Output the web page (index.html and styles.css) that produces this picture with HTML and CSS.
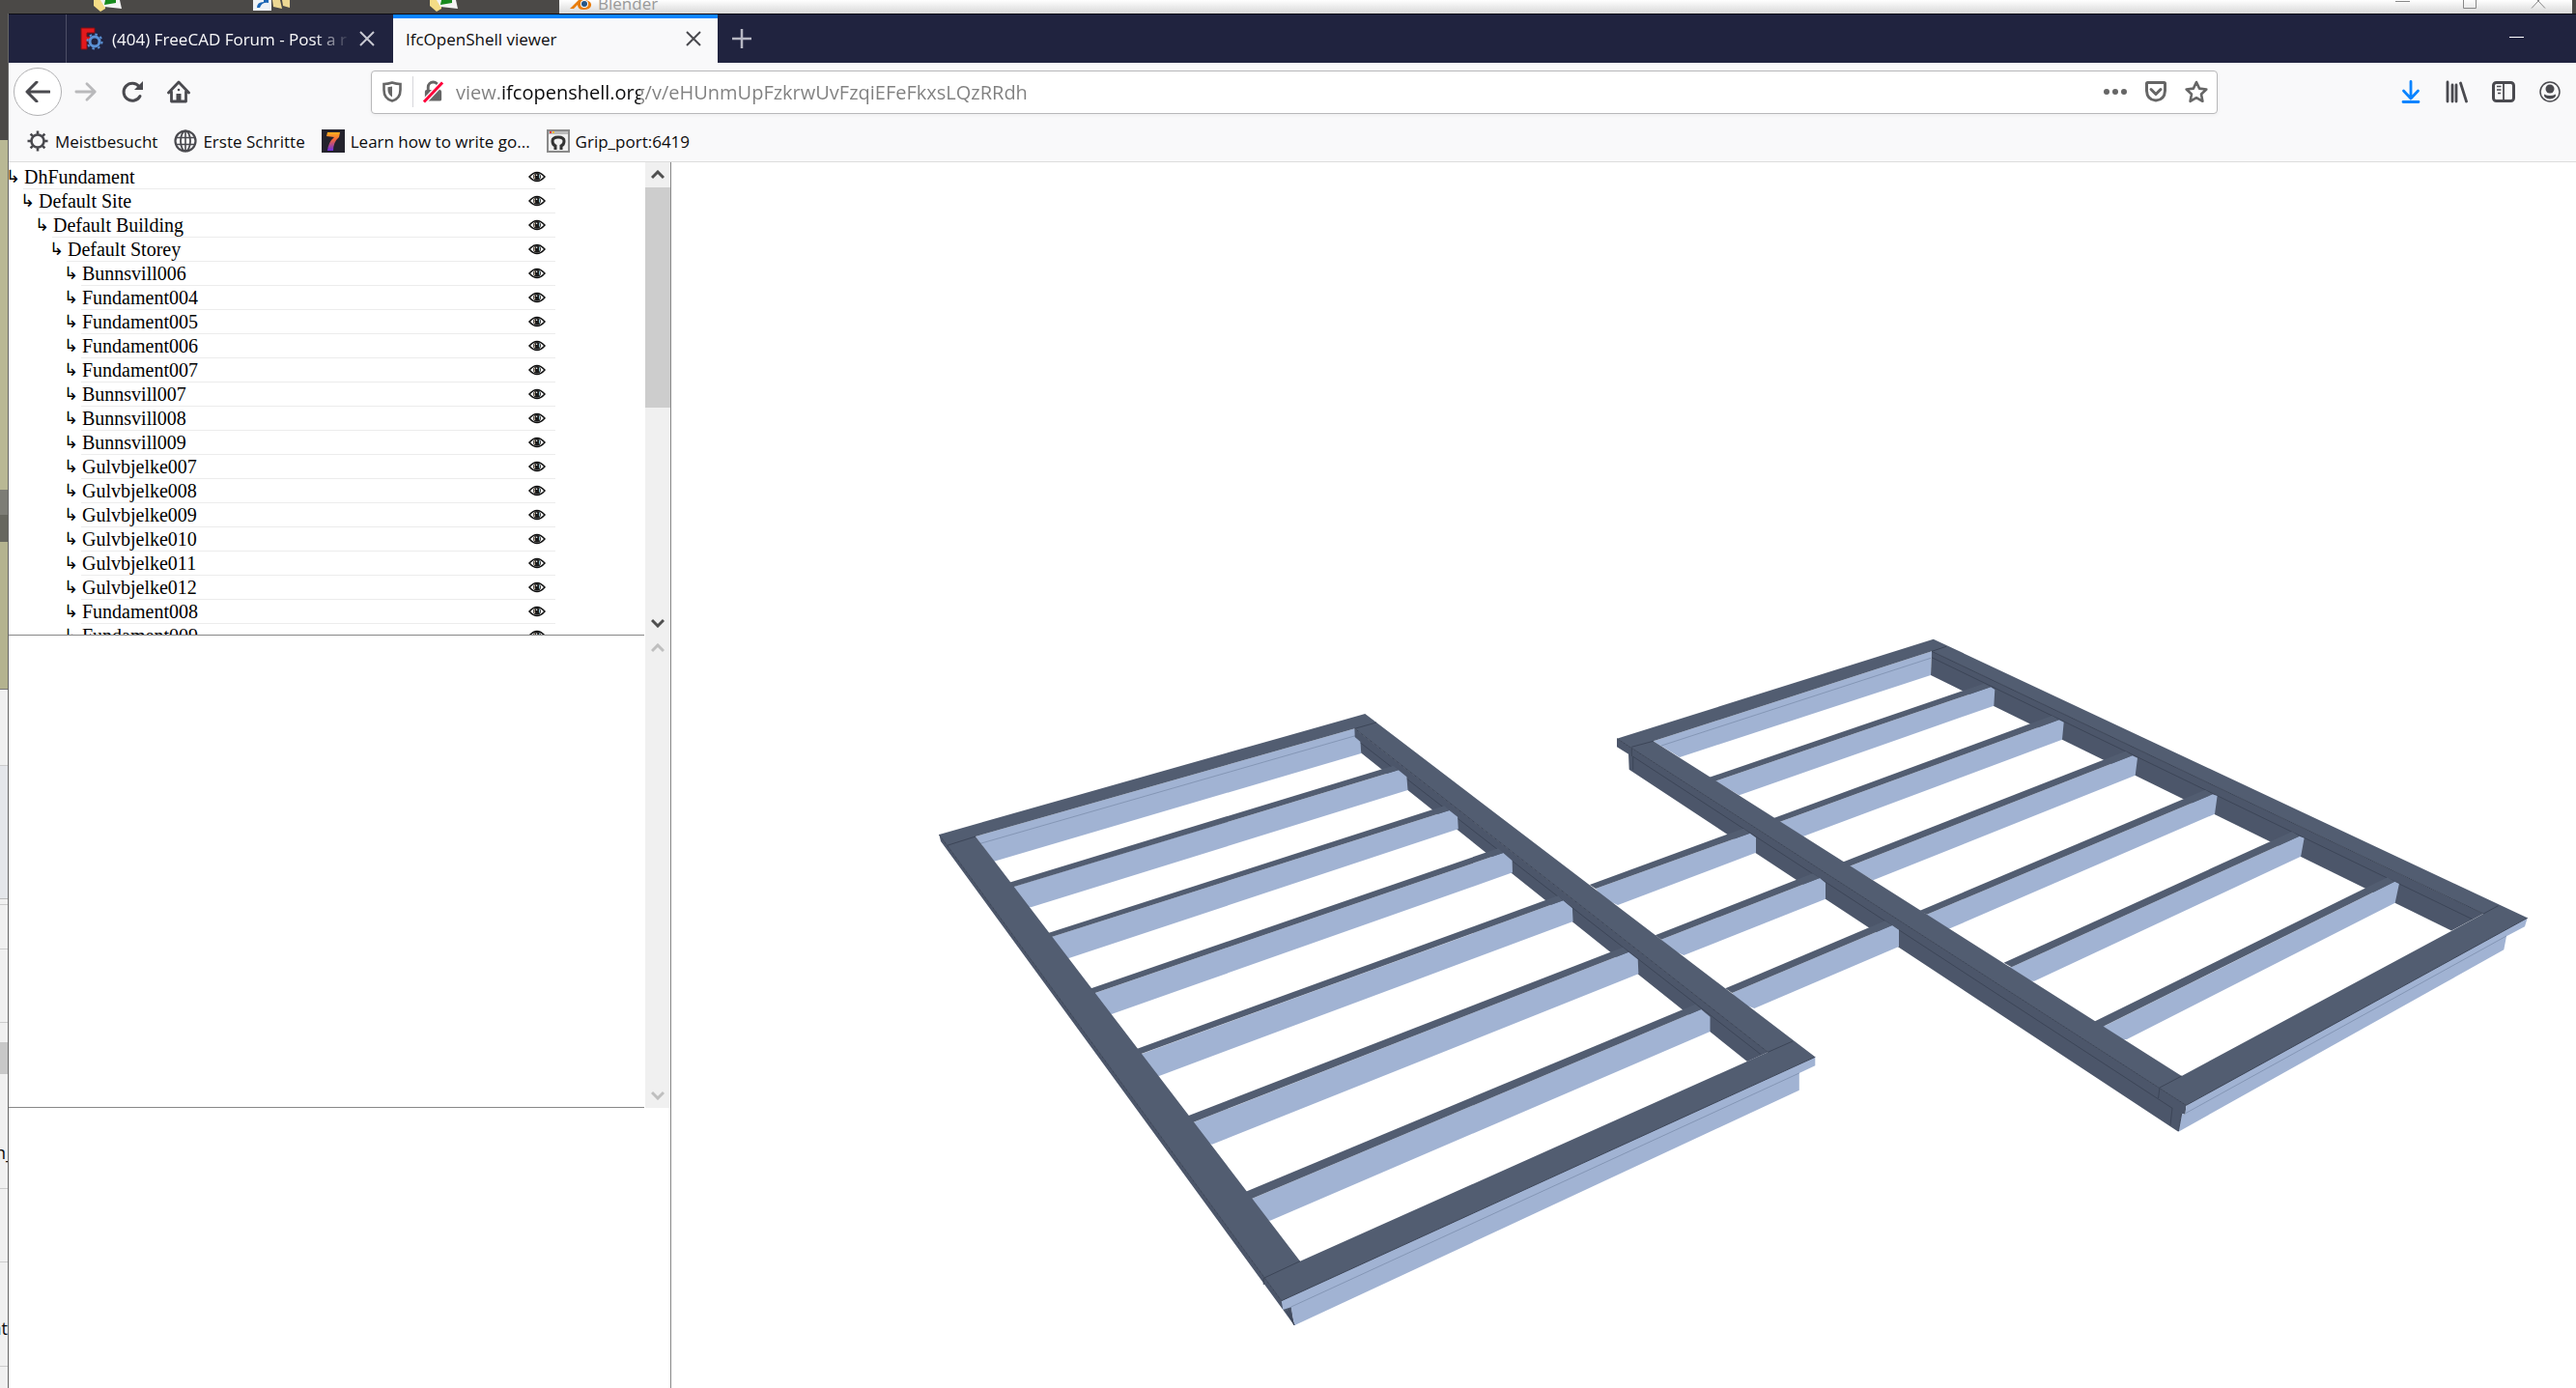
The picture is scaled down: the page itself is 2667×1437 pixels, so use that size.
FILE: index.html
```html
<!DOCTYPE html>
<html lang="de">
<head>
<meta charset="utf-8">
<title>IfcOpenShell viewer</title>
<link rel="stylesheet" href="styles.css">
</head>
<body>
<svg class="defs" aria-hidden="true">
  <symbol id="eye" viewBox="0 0 18 14"><path d="M1 7Q5 2.500 9 2.500T17 7Q13 11.500 9 11.500T1 7z" fill="#fff" stroke="#111" stroke-width="1.500"/><circle cx="9" cy="6.800" r="3.900" fill="#1a1a1a"/><path d="M6.800 4.500q-1.200 2.300 0 4.600" stroke="#cdb9a4" fill="none"/><path d="M11.500 4.500v4" stroke="#9bc3cc" fill="none"/><circle cx="8.600" cy="5.200" r=".8" fill="#fff"/></symbol>
  <symbol id="close" viewBox="0 0 16 16"><path d="M1 1l14 14M15 1L1 15" fill="none" stroke="currentColor" stroke-width="2"/></symbol>
  <symbol id="up" viewBox="0 0 14 10"><path d="M1 8l6-6 6 6" fill="none" stroke="currentColor" stroke-width="3"/></symbol>
  <symbol id="down" viewBox="0 0 14 10"><path d="M1 2l6 6 6-6" fill="none" stroke="currentColor" stroke-width="3"/></symbol>
  <symbol id="folder" viewBox="0 0 34 14"><path d="M1 0h12v9l-5 3-7-6z" fill="#f4dc86"/><path d="M8 0h20l2 9-18-2z" fill="#f3f3f3"/><path d="M13 0h11v3l-12 2z" fill="#178a1d"/></symbol>
</svg>

<header class="desktop-top">
  <svg class="shortcut first" viewBox="0 0 34 14"><use href="#folder"/></svg>
  <svg class="shortcut second" viewBox="0 0 40 14"><path d="M0 0h19v11H0z" fill="#eef2f6"/><path d="M4 8q0-6 7-6V0h5v3q-7-1-9 5z" fill="#1b66b5"/><path d="M20 0h8l2 9-9-2zM30 0h8v8l-7-2z" fill="#edd893"/></svg>
  <svg class="shortcut third" viewBox="0 0 34 14"><use href="#folder"/></svg>
  <div class="blender">
    <svg class="blender-logo" viewBox="0 0 24 12"><path d="M0 9L9 0h8q6 2 5 6t-8 4q-6 0-6-5L4 9z" fill="#e87d0d"/><circle cx="15" cy="4" r="4" fill="#fff"/><circle cx="15" cy="4" r="3" fill="#265787"/></svg>
    <span>Blender</span>
    <svg class="blender-controls" viewBox="0 0 156 10"><path d="M0 1.500h15M70.500 0v8.500h13V0M141 8.500L149 0M155 8.500L147 0" fill="none" stroke="#888"/></svg>
  </div>
</header>

<div class="desktop">
  <aside class="behind">
    <div class="b-dark"></div><div class="b-olive"></div><div class="b-roof"></div><div class="b-shade"></div><div class="b-olive2"></div>
    <div class="b-pale"></div><div class="b-band"></div><div class="b-gap"></div><div class="b-row46"></div><div class="b-row76"></div><div class="b-pale20"></div><div class="b-thumb"></div><div class="b-rest"></div>
    <div class="b-text under">n_</div><div class="b-row76"></div><div class="b-text tall">nt</div><div class="b-end"></div>
  </aside>

  <div class="window">
    <nav class="tabs" aria-label="Tabs">
      <div class="tab inactive">
        <svg class="favicon" viewBox="0 0 24 24"><path d="M1 1h14v5H7v4h6v4H7v9H1z" fill="#e4191c" stroke="#7e1015"/><circle cx="15" cy="15" r="5" fill="#20233f" stroke="#5b92d6" stroke-width="3"/><circle cx="15" cy="15" r="7.500" fill="none" stroke="#5b92d6" stroke-width="2" stroke-dasharray="2.500 3.400"/></svg>
        <span class="tab-title">(404) FreeCAD Forum - Post a r</span>
        <button class="tab-close" aria-label="Tab schließen"><svg viewBox="0 0 16 16"><use href="#close"/></svg></button>
      </div>
      <div class="tab active">
        <span class="tab-title">IfcOpenShell viewer</span>
        <button class="tab-close" aria-label="Tab schließen"><svg viewBox="0 0 16 16"><use href="#close"/></svg></button>
      </div>
      <button class="new-tab" aria-label="Neuer Tab"><svg viewBox="0 0 20 20"><path d="M10 0v20M0 10h20" stroke="currentColor" stroke-width="2.500"/></svg></button>
      <button class="minimize" aria-label="Minimieren"></button>
    </nav>

    <div class="toolbar">
      <button class="back" aria-label="Zurück"><svg viewBox="0 0 26 22"><path d="M25 11H3M12 1L2 11l10 10" fill="none" stroke="currentColor" stroke-width="3" stroke-linecap="round" stroke-linejoin="round"/></svg></button>
      <button class="nav-btn dim" aria-label="Vor"><svg viewBox="0 0 26 22"><path d="M2 11h21M14 2l9 9-9 9" fill="none" stroke="currentColor" stroke-width="3" stroke-linecap="round" stroke-linejoin="round"/></svg></button>
      <button class="nav-btn" aria-label="Neu laden"><svg viewBox="0 0 24 24"><path d="M20 16.500A9 9 0 1 1 19 6.500" fill="none" stroke="currentColor" stroke-width="3" stroke-linecap="round"/><path d="M14 10h9V1z" fill="currentColor"/></svg></button>
      <button class="nav-btn" aria-label="Startseite"><svg viewBox="0 0 24 24"><path d="M1.500 13L12 2l10.500 11M4.500 12v10h15V12" fill="none" stroke="currentColor" stroke-width="2.800" stroke-linejoin="round" stroke-linecap="round"/><path d="M9.500 14h5v8h-5z" fill="currentColor"/><circle cx="12" cy="10" r="1.300" fill="currentColor"/></svg></button>
      <div class="urlbar">
        <svg class="shield" viewBox="0 0 20 22"><path d="M10 1.500C7 2.500 4 3 1.500 3v6c0 6 3 10 8.500 11.500C15.500 19 18.500 15 18.500 9V3C16 3 13 2.500 10 1.500z" fill="none" stroke="#666" stroke-width="2.600"/><path d="M10 5.500v11C7 15 5.500 12 5.500 9V6.200z" fill="#666"/></svg>
        <svg class="lock" viewBox="0 0 24 24"><path d="M6.500 11V7a5.500 5.500 0 0 1 11 0v4" fill="none" stroke="#666" stroke-width="3"/><rect x="3" y="10" width="18" height="12" rx="2" fill="#666"/><path d="M2 23L22 2" stroke="#f9f9fa" stroke-width="6"/><path d="M2 23L22 2" stroke="#ff0039" stroke-width="3"/></svg>
        <input class="url" type="text" aria-label="Adresse" value="view.ifcopenshell.org/v/eHUnmUpFzkrwUvFzqiEFeFkxsLQzRRdh">
        <button class="nav-btn grey" aria-label="Seitenaktionen"><svg viewBox="0 0 24 24"><circle cx="3" cy="12" r="3" fill="currentColor"/><circle cx="12" cy="12" r="3" fill="currentColor"/><circle cx="21" cy="12" r="3" fill="currentColor"/></svg></button>
        <button class="nav-btn grey" aria-label="Pocket"><svg viewBox="0 0 24 24"><path d="M3.500 2.500h17q1 0 1 1V11q-.5 9.500-9.500 10Q3 20.500 2.500 11V3.500q0-1 1-1z" fill="none" stroke="currentColor" stroke-width="3"/><path d="M7 9.500l5 5 5-5" fill="none" stroke="currentColor" stroke-width="3" stroke-linecap="round" stroke-linejoin="round"/></svg></button>
        <button class="nav-btn grey" aria-label="Lesezeichen hinzufügen"><svg viewBox="0 0 24 24"><path d="M12 2l3.100 6.600 7.200.9-5.300 5 1.400 7.300L12 18.200l-6.400 3.600L7 14.500l-5.300-5 7.200-.9z" fill="none" stroke="currentColor" stroke-width="2.600" stroke-linejoin="round"/></svg></button>
      </div>
      <div class="tools">
        <button class="nav-btn blue" aria-label="Downloads"><svg viewBox="0 0 24 24"><path d="M12 1.500v17M4.500 11l7.500 8 7.500-8M4 22.500h16" fill="none" stroke="currentColor" stroke-width="2.800" stroke-linecap="round" stroke-linejoin="round"/></svg></button>
        <button class="nav-btn" aria-label="Bibliothek"><svg viewBox="0 0 24 24"><path d="M2 2v20M7 5v17M11 5v17M15.500 3l6 19" fill="none" stroke="currentColor" stroke-width="2.800" stroke-linecap="round"/></svg></button>
        <button class="nav-btn" aria-label="Seitenleiste"><svg viewBox="0 0 24 24"><rect x="1.500" y="2.500" width="21" height="19" rx="3" fill="none" stroke="currentColor" stroke-width="3"/><path d="M12 3v18" stroke="currentColor" stroke-width="1.800"/><path d="M5 6.500h4.500M5 10h4.500M6 13.500h3" stroke="currentColor" stroke-width="1.600"/></svg></button>
        <button class="nav-btn" aria-label="Konto"><svg viewBox="0 0 24 24"><circle cx="12" cy="12" r="10" fill="none" stroke="currentColor" stroke-width="1.500"/><circle cx="12" cy="9" r="4.500" fill="currentColor"/><path d="M6 14.500q6 3 12 0 .5 4.500-6 5-6.500-.5-6-5z" fill="currentColor"/></svg></button>
      </div>
    </div>

    <nav class="bookmarks" aria-label="Lesezeichen">
      <a href="#"><svg viewBox="0 0 24 24"><circle cx="12" cy="12" r="6.500" fill="none" stroke="#4a4a4f" stroke-width="2.600"/><path d="M12 1.500v4M12 18.500v4M1.500 12h4M18.500 12h4M4.600 4.600l2.800 2.800M16.600 16.600l2.800 2.800M19.400 4.600l-2.800 2.800M7.400 16.600l-2.800 2.800" stroke="#4a4a4f" stroke-width="2.600"/></svg>Meistbesucht</a>
      <a href="#"><svg viewBox="0 0 24 24"><circle cx="12" cy="12" r="10.500" fill="none" stroke="#4a4a4f" stroke-width="2.200"/><ellipse cx="12" cy="12" rx="5" ry="10.500" fill="none" stroke="#4a4a4f" stroke-width="1.800"/><path d="M12 2v20M2 8.500h20M2 15.500h20" stroke="#4a4a4f" stroke-width="1.600"/></svg>Erste Schritte</a>
      <a href="#"><svg viewBox="0 0 24 24"><defs><linearGradient id="seven" x2="0" y2="1"><stop stop-color="#ffb21c"/><stop offset=".4" stop-color="#f2643d"/><stop offset="1" stop-color="#6b2ee0"/></linearGradient></defs><path d="M0 0h24v24H0z" fill="#23222d"/><path d="M5 7l1-4h13l-1 5q-6 5-6 14H6q1-9 7-14z" fill="url(#seven)"/></svg>Learn how to write go...</a>
      <a href="#"><svg viewBox="0 0 24 24"><path d="M1 1h22v22H1z" fill="#f0f0f0" stroke="#8a8a8a" stroke-width="2"/><path d="M2 2h20v3H2z" fill="#bbb"/><path d="M3 2h2v2H3z" fill="#e33"/><path d="M6 2h2v2H6z" fill="#fb3"/><path d="M9 21v-4q-3-1-3-5 0-4 6-4t6 4q0 4-3 5v4" fill="none" stroke="#333" stroke-width="3"/></svg>Grip_port:6419</a>
    </nav>

    <main class="page">
      <section class="side">
        <div class="panel">
          <ul class="tree">
            <li class="l0"><span class="hook">↳</span><span class="name">DhFundament</span><button class="eye" aria-label="Sichtbarkeit"><svg viewBox="0 0 18 14"><use href="#eye"/></svg></button></li>
            <li class="l1"><span class="hook">↳</span><span class="name">Default Site</span><button class="eye" aria-label="Sichtbarkeit"><svg viewBox="0 0 18 14"><use href="#eye"/></svg></button></li>
            <li class="l2"><span class="hook">↳</span><span class="name">Default Building</span><button class="eye" aria-label="Sichtbarkeit"><svg viewBox="0 0 18 14"><use href="#eye"/></svg></button></li>
            <li class="l3"><span class="hook">↳</span><span class="name">Default Storey</span><button class="eye" aria-label="Sichtbarkeit"><svg viewBox="0 0 18 14"><use href="#eye"/></svg></button></li>
            <li class="l4"><span class="hook">↳</span><span class="name">Bunnsvill006</span><button class="eye" aria-label="Sichtbarkeit"><svg viewBox="0 0 18 14"><use href="#eye"/></svg></button></li>
            <li class="l4"><span class="hook">↳</span><span class="name">Fundament004</span><button class="eye" aria-label="Sichtbarkeit"><svg viewBox="0 0 18 14"><use href="#eye"/></svg></button></li>
            <li class="l4"><span class="hook">↳</span><span class="name">Fundament005</span><button class="eye" aria-label="Sichtbarkeit"><svg viewBox="0 0 18 14"><use href="#eye"/></svg></button></li>
            <li class="l4"><span class="hook">↳</span><span class="name">Fundament006</span><button class="eye" aria-label="Sichtbarkeit"><svg viewBox="0 0 18 14"><use href="#eye"/></svg></button></li>
            <li class="l4"><span class="hook">↳</span><span class="name">Fundament007</span><button class="eye" aria-label="Sichtbarkeit"><svg viewBox="0 0 18 14"><use href="#eye"/></svg></button></li>
            <li class="l4"><span class="hook">↳</span><span class="name">Bunnsvill007</span><button class="eye" aria-label="Sichtbarkeit"><svg viewBox="0 0 18 14"><use href="#eye"/></svg></button></li>
            <li class="l4"><span class="hook">↳</span><span class="name">Bunnsvill008</span><button class="eye" aria-label="Sichtbarkeit"><svg viewBox="0 0 18 14"><use href="#eye"/></svg></button></li>
            <li class="l4"><span class="hook">↳</span><span class="name">Bunnsvill009</span><button class="eye" aria-label="Sichtbarkeit"><svg viewBox="0 0 18 14"><use href="#eye"/></svg></button></li>
            <li class="l4"><span class="hook">↳</span><span class="name">Gulvbjelke007</span><button class="eye" aria-label="Sichtbarkeit"><svg viewBox="0 0 18 14"><use href="#eye"/></svg></button></li>
            <li class="l4"><span class="hook">↳</span><span class="name">Gulvbjelke008</span><button class="eye" aria-label="Sichtbarkeit"><svg viewBox="0 0 18 14"><use href="#eye"/></svg></button></li>
            <li class="l4"><span class="hook">↳</span><span class="name">Gulvbjelke009</span><button class="eye" aria-label="Sichtbarkeit"><svg viewBox="0 0 18 14"><use href="#eye"/></svg></button></li>
            <li class="l4"><span class="hook">↳</span><span class="name">Gulvbjelke010</span><button class="eye" aria-label="Sichtbarkeit"><svg viewBox="0 0 18 14"><use href="#eye"/></svg></button></li>
            <li class="l4"><span class="hook">↳</span><span class="name">Gulvbjelke011</span><button class="eye" aria-label="Sichtbarkeit"><svg viewBox="0 0 18 14"><use href="#eye"/></svg></button></li>
            <li class="l4"><span class="hook">↳</span><span class="name">Gulvbjelke012</span><button class="eye" aria-label="Sichtbarkeit"><svg viewBox="0 0 18 14"><use href="#eye"/></svg></button></li>
            <li class="l4"><span class="hook">↳</span><span class="name">Fundament008</span><button class="eye" aria-label="Sichtbarkeit"><svg viewBox="0 0 18 14"><use href="#eye"/></svg></button></li>
            <li class="l4"><span class="hook">↳</span><span class="name">Fundament009</span><button class="eye" aria-label="Sichtbarkeit"><svg viewBox="0 0 18 14"><use href="#eye"/></svg></button></li>
          </ul>
          <div class="scrollbar">
            <button aria-label="Nach oben"><svg viewBox="0 0 14 10"><use href="#up"/></svg></button>
            <div class="track"><div class="thumb"></div></div>
            <button aria-label="Nach unten"><svg viewBox="0 0 14 10"><use href="#down"/></svg></button>
          </div>
        </div>
        <div class="panel">
          <div class="props"></div>
          <div class="scrollbar disabled">
            <button disabled aria-label="Nach oben"><svg viewBox="0 0 14 10"><use href="#up"/></svg></button>
            <div class="track"></div>
            <button disabled aria-label="Nach unten"><svg viewBox="0 0 14 10"><use href="#down"/></svg></button>
          </div>
        </div>
        <div class="rest"></div>
      </section>
      <section class="viewer">
        <svg class="model" viewBox="695 168 1972 1269" preserveAspectRatio="xMidYMid meet" role="img" aria-label="3D-Modell">
          <!-- right frame: rim, inner wall and joists -->
          <path class="lit" d="M1711.700 767.300L2000 674.300 1999 699 1739 784z"/>
          <path class="wall" d="M2000 674L2571 946 2538 963.500 1999 699z"/>
          <path class="edge" d="M2000 680.700L2559.700 951.700"/>
          <path class="faint" d="M1720 772L1999 681.300"/>
          <path class="lit" d="M1775.700 808.700L2061 711.300 2065.300 714 2064.300 730.700 1800.700 823.300 1770 805z"/>
          <path class="top" d="M1769 805L2054 707.700 2061 711.300 1775.700 808.700z"/>
          <path class="lit" d="M1842.300 851L2131.700 745.300 2136.700 747.700 2135 765.700 1866.700 866 1836 847z"/>
          <path class="top" d="M1835.700 847.300L2124.300 741 2131.700 745.300 1842.300 851z"/>
          <path class="lit" d="M1915 896.700L2207.600 782.300 2213 784.700 2210.700 802.700 1939.300 911.300 1908 893z"/>
          <path class="top" d="M1907.300 892.700L2200.700 777.700 2207.600 782.300 1915 896.700z"/>
          <path class="lit" d="M1995 946.700L2290.700 822.300 2295.600 824 2293 842.700 2018.700 961.300 2010 961 1988 945z"/>
          <path class="top" d="M1987.300 943L2283 817.700 2290.700 822.300 1995 946.700z"/>
          <path class="lit" d="M2082.600 1001.300L2380.600 865.700 2385.600 867.700 2382.100 886.700 2106.200 1015.700 2096 1016 2076 1000z"/>
          <path class="top" d="M2074.600 996.700L2373 861 2380.600 865.700 2082.600 1001.300z"/>
          <path class="lit" d="M2179.400 1062L2479.300 912.700 2483.900 915 2479.700 934.700 2202 1076 2192 1077 2170 1060z"/>
          <path class="top" d="M2167 1058.300L2471.700 908.300 2479.300 912.700 2175 1064z"/>
          <path class="wall" d="M1674 764.700L2263.400 1144.300 2262.500 1154 2258.700 1152.700 2255.400 1171.700 1686.700 796.700 1686 780.700 1674 773.300z"/>
          <path class="lit" d="M2263.400 1144.300L2616.700 950.300 2614 959.300 2595 969.300 2592.300 983.300 2255.400 1171.700 2258.700 1152.700 2262.500 1154z"/>
          <path class="faint" d="M2262 1153L2595 969"/>
          <path class="edge" d="M1690.700 783.300L2249 1147.300M1689.300 773v10M1690.700 783v14M2236 1126L2234.500 1137M2249 1147L2247 1165M2258.700 1152.700L2255.400 1171"/>
          <path class="top" fill-rule="evenodd" d="M1674 764.700L2001.700 661.700 2616.700 950.300 2263.400 1144.300zM1711.700 767.300L2258.700 1114 2571.200 946 2000 674.300z"/>
          <path class="seam" d="M1689.300 773.300L1711.700 767.300M2000 674.300L2015 669.300M2571.200 946L2586.500 937.700M2236 1126L2258.700 1114M1674 764.700L2263.400 1144.300 2616.700 950.300M2000 674.300L2571.200 946"/>

          <!-- joists that bridge the two frames -->
          <path class="lit" d="M1652 920L1811.700 862.700 1818 867.300 1818 882.700 1675 937 1660 930z"/>
          <path class="top" d="M1645.800 916L1805 857.700 1811.700 862.700 1652 920z"/>
          <path class="lit" d="M1719.900 972.700L1884 909 1890 914 1890 930.700 1743.300 989 1728 982z"/>
          <path class="top" d="M1713.700 968.300L1876.700 904.300 1884 909 1719.900 972.700z"/>
          <path class="lit" d="M1793.200 1028L1959 958 1966 962.700 1966 980 1816.300 1044 1800 1038z"/>
          <path class="top" d="M1786.300 1023.300L1951.700 953.300 1959 958 1793.200 1028z"/>

          <!-- left frame -->
          <path class="lit" d="M1010 866L1402.700 754.300 1409.300 768 1409.300 780 1029.300 891.700z"/>
          <path class="faint" d="M1015 873.300L1403.300 761.700"/>
          <path class="wall" d="M1402.400 754.300L1830.400 1089.300 1809 1099 1409.200 779.500 1408.500 768 1402.700 763z"/>
          <path class="edge" d="M1408.500 769L1823 1091.700"/>
          <path class="lit" d="M1049.300 918L1447.800 797.300 1456.400 804.300 1457.500 818 1067.300 939.300 1058 938 1044 918z"/>
          <path class="top" d="M1044 914L1442.600 792.700 1447.800 797.300 1045 919.500z"/>
          <path class="lit" d="M1089.300 969.700L1500.500 839 1509.100 845.700 1509.800 858.300 1106.700 992 1097 990 1082 970z"/>
          <path class="top" d="M1082 967L1495.300 834.300 1500.500 839 1084 971.500z"/>
          <path class="lit" d="M1134 1028L1556.300 883 1565.600 891 1566 903.300 1150.700 1050 1140 1048 1126 1028z"/>
          <path class="top" d="M1126 1024.500L1551.100 878.300 1556.300 883 1128 1030z"/>
          <path class="lit" d="M1182.300 1091L1618.300 932.300 1627.900 940.300 1628.600 954 1200 1114 1190 1112 1174 1090z"/>
          <path class="top" d="M1174 1087L1613.100 927.300 1618.300 932.300 1176 1093z"/>
          <path class="lit" d="M1236 1161.700L1686.100 985.700 1695.700 993.300 1696.400 1008.300 1255 1184.700 1244 1182 1228 1160z"/>
          <path class="top" d="M1228 1156L1680.200 980.700 1686.100 985.700 1230 1164z"/>
          <path class="lit" d="M1296.700 1240.700L1761.200 1045 1770.500 1052.700 1770.500 1068 1315 1263.700 1304 1262 1288 1240z"/>
          <path class="top" d="M1288 1234.500L1755.300 1039.700 1761.200 1045 1290 1243.500z"/>
          <path class="wall" d="M972.300 864L1326.700 1346.700 1337 1353 1340 1372.300 1328.300 1356 974 871z"/>
          <path class="lit" d="M1326.700 1346.700L1879.300 1094.300V1103.300L1862.800 1111V1128.700L1340 1372.300 1336.700 1353.300 1328.300 1356z"/>
          <path class="faint" d="M1336.700 1353L1862.800 1111"/>
          <path class="edge" d="M1332 1357l8 15M1334 1355l6 17"/>
          <path class="top" fill-rule="evenodd" d="M972.300 864L1413.300 739 1879.300 1094.300 1326.700 1346.700zM1010 866L1346 1305.700 1830.400 1089.300 1402.700 754.300z"/>
          <path class="seam" d="M980.700 875.300L1010 866M1402.700 754.300L1425 748M1830.400 1089.300L1855.900 1078M1308.300 1323.300L1346 1305.700M972.300 864L1326.700 1346.700 1879.300 1094.300M1402.700 754.300L1830.400 1089.300M1308.300 1323.300V1330"/>
        </svg>
      </section>
    </main>
  </div>
</div>
</body>
</html>
```

FILE: styles.css
```css
* { box-sizing: border-box; }

body {
  margin: 0;
  height: 100vh;
  display: flex;
  flex-direction: column;
  overflow: hidden;
  background: #4b4947;
  font-family: "Open Sans", "Noto Sans", sans-serif;
  font-size: 17px;
  color: #0c0c0d;
}

button {
  border: 0;
  padding: 0;
  background: none;
  color: inherit;
  display: flex;
  align-items: center;
  justify-content: center;
}

svg { display: block; }
.defs { display: none; }

/* Desktop strip above the browser */
.desktop-top {
  flex: 0 0 14px;
  display: flex;
  overflow: hidden;
  padding-right: 4px;
}
.shortcut { flex: none; width: 34px; height: 14px; }
.first { margin-left: 96px; }
.second { margin-left: 132px; width: 40px; }
.third { margin-left: 142px; }
.blender {
  flex: 1;
  margin-left: 101px;
  padding: 0 27px 0 11px;
  display: flex;
  align-items: flex-end;
  gap: 5px;
  line-height: 20px;
  color: #999;
  background: linear-gradient(#fff, #d8d8d8);
}
.blender-logo { width: 24px; height: 12px; align-self: flex-start; }
.blender-controls { width: 156px; height: 10px; margin-left: auto; align-self: flex-start; }

.desktop { flex: 1; min-height: 0; display: flex; }

/* Windows showing behind the left edge */
.behind {
  flex: 0 0 9px;
  display: flex;
  flex-direction: column;
  overflow: hidden;
  background: #f0f0f0;
  border-right: 1px solid #666;
  font-size: 18px;
  line-height: 24px;
}
.behind > div { flex: none; }
.b-dark { height: 131px; background: #4b4947; }
.b-olive { height: 362px; background: #b9b894; }
.b-roof { height: 26px; background: #7d7d76; }
.b-shade { height: 28px; background: #67675f; }
.b-olive2 { height: 153px; background: #b4b38f; border-bottom: 1px solid #777; }
.b-pale { height: 79px; border-bottom: 1px solid #ccc; }
.b-band { height: 138px; background: #e4e6ea; border-bottom: 1px solid #bbb; }
.b-gap { height: 6px; border-bottom: 1px solid #ccc; }
.b-row46 { height: 46px; border-bottom: 1px solid #ccc; }
.b-row76 { height: 76px; border-bottom: 1px solid #ccc; }
.b-pale20 { height: 20px; }
.b-thumb { height: 33px; background: #c8c8c8; }
.b-rest { height: 69px; }
.b-text { height: 50px; border-bottom: 1px solid #ccc; display: flex; justify-content: flex-end; }
.b-text.under { justify-content: flex-start; text-indent: -5px; }
.b-text.tall { height: 108px; padding-top: 56px; }

.window {
  flex: 1;
  min-width: 0;
  display: flex;
  flex-direction: column;
  background: #fff;
}

/* Tab strip */
.tabs {
  flex: 0 0 51px;
  display: flex;
  border-top: 1px solid #0c0c14;
  padding-left: 59px;
  background: #20233f;
  color: #f9f9fa;
}
.tab { display: flex; align-items: center; }
.inactive { width: 339px; padding: 0 19px 0 14px; gap: 9px; border-left: 1px solid #4d4f66; }
.active { width: 336px; padding: 0 17px 4px 13px; background: #f9f9fa; color: #0c0c0d; border-top: 4px solid #0a84ff; }
.favicon { flex: none; width: 24px; height: 24px; }
.tab-title { flex: 1; min-width: 0; overflow: hidden; white-space: nowrap; }
.inactive .tab-title {
  -webkit-mask-image: linear-gradient(90deg, #000 85%, transparent);
  mask-image: linear-gradient(90deg, #000 85%, transparent);
}
.tab-close svg { width: 16px; height: 16px; }
.tab-close { flex: none; }
.inactive .tab-close { color: #c7c8d1; }
.active .tab-close { color: #4a4a4f; }
.new-tab { width: 50px; color: #b6b7c3; }
.new-tab svg { width: 20px; height: 20px; }
.minimize { margin: 23px 54px 0 auto; width: 15px; height: 1px; background: #fff; }

/* Navigation toolbar */
.toolbar {
  flex: 0 0 60px;
  display: flex;
  align-items: center;
  gap: 24px;
  padding: 0 15px 0 5px;
  background: #f9f9fa;
  color: #4a4a4f;
}
.back { width: 50px; height: 50px; margin-right: -11px; border: 1px solid #b1b1b3; border-radius: 50%; background: #fff; }
.back svg, .dim svg { width: 26px; height: 22px; }
.nav-btn { flex: none; width: 24px; height: 24px; }
.nav-btn svg { width: 24px; height: 24px; }
.toolbar .dim { color: #b9b9bb; }
.toolbar .dim svg { height: 22px; }
.blue { color: #0a84ff; }
.grey { color: #666; }
.urlbar {
  flex: 1;
  min-width: 0;
  height: 45px;
  margin: 0 164px 0 163px;
  display: flex;
  align-items: center;
  gap: 18px;
  padding: 0 9px 0 11px;
  background: #fff;
  border: 1px solid #b8b8ba;
  border-radius: 4px;
  box-shadow: 0 1px 4px #0000000d;
}
.shield { flex: none; width: 20px; height: 22px; }
.lock { flex: none; width: 33px; height: 32px; padding: 4px 0 4px 9px; border-left: 1px solid #d7d7db; margin: 0 -6px 0 -7px; }
.url {
  flex: 1;
  min-width: 0;
  border: 0;
  padding: 0;
  outline: 0;
  font: inherit;
  font-size: 20px;
  color: transparent;
  background: linear-gradient(90deg, #808080 47px, #0c0c0d 47px, #0c0c0d 191px, #808080 191px);
  -webkit-background-clip: text;
  background-clip: text;
}
.tools { display: flex; gap: 24px; }

/* Bookmarks toolbar */
.bookmarks {
  flex: 0 0 43px;
  display: flex;
  align-items: center;
  gap: 17px;
  padding: 0 18px;
  background: #f9f9fa;
  border-bottom: 1px solid #ddd;
}
.bookmarks a { display: flex; align-items: center; gap: 6px; color: inherit; text-decoration: none; white-space: nowrap; }
.bookmarks svg { width: 24px; height: 24px; }

/* Page content */
.page { flex: 1; min-height: 0; display: flex; }
.side {
  flex: 0 0 26%;
  max-width: 686px;
  display: flex;
  flex-direction: column;
  border-right: 1px solid #888;
}
.panel { flex: 49 0 0; min-height: 0; display: flex; overflow: hidden; }
.rest { flex: 29 0 0; }
.tree, .props { flex: 1; min-width: 0; border-bottom: 1px solid #888; margin-right: 1px; }
.tree {
  margin-top: 0;
  margin-bottom: 0;
  padding: 3px 92px 0 15px;
  overflow: hidden;
  list-style: none;
  font: 20px/24px "Liberation Serif", "Times New Roman", serif;
  color: #000;
}
.tree li { height: 25px; display: flex; align-items: center; border-bottom: 1px solid #ececec; }
.l1 { margin-left: 15px; }
.l2 { margin-left: 30px; }
.l3 { margin-left: 45px; }
.l4 { margin-left: 60px; }
.hook { width: 19px; margin-left: -18px; font: 18px/24px "DejaVu Sans", sans-serif; }
.name { flex: 1; white-space: nowrap; }
.eye { margin-right: 10px; }
.eye svg { width: 18px; height: 14px; }

.scrollbar { flex: 0 0 26px; display: flex; flex-direction: column; background: #f0f0f0; color: #505050; }
.scrollbar button { flex: 0 0 26px; }
.scrollbar svg { width: 14px; height: 10px; }
.disabled { color: #bfbfbf; }
.track { flex: 1; }
.thumb { height: 52%; background: #cdcdcd; }

.viewer { flex: 1; min-width: 0; }
.model { width: 100%; height: 100%; }
.top { fill: #525d71; }
.wall { fill: #4c566a; }
.lit { fill: #a1b3d3; }
.edge, .seam, .faint { fill: none; stroke: #3c4557; }
.faint { stroke: #8496b5; }
```
